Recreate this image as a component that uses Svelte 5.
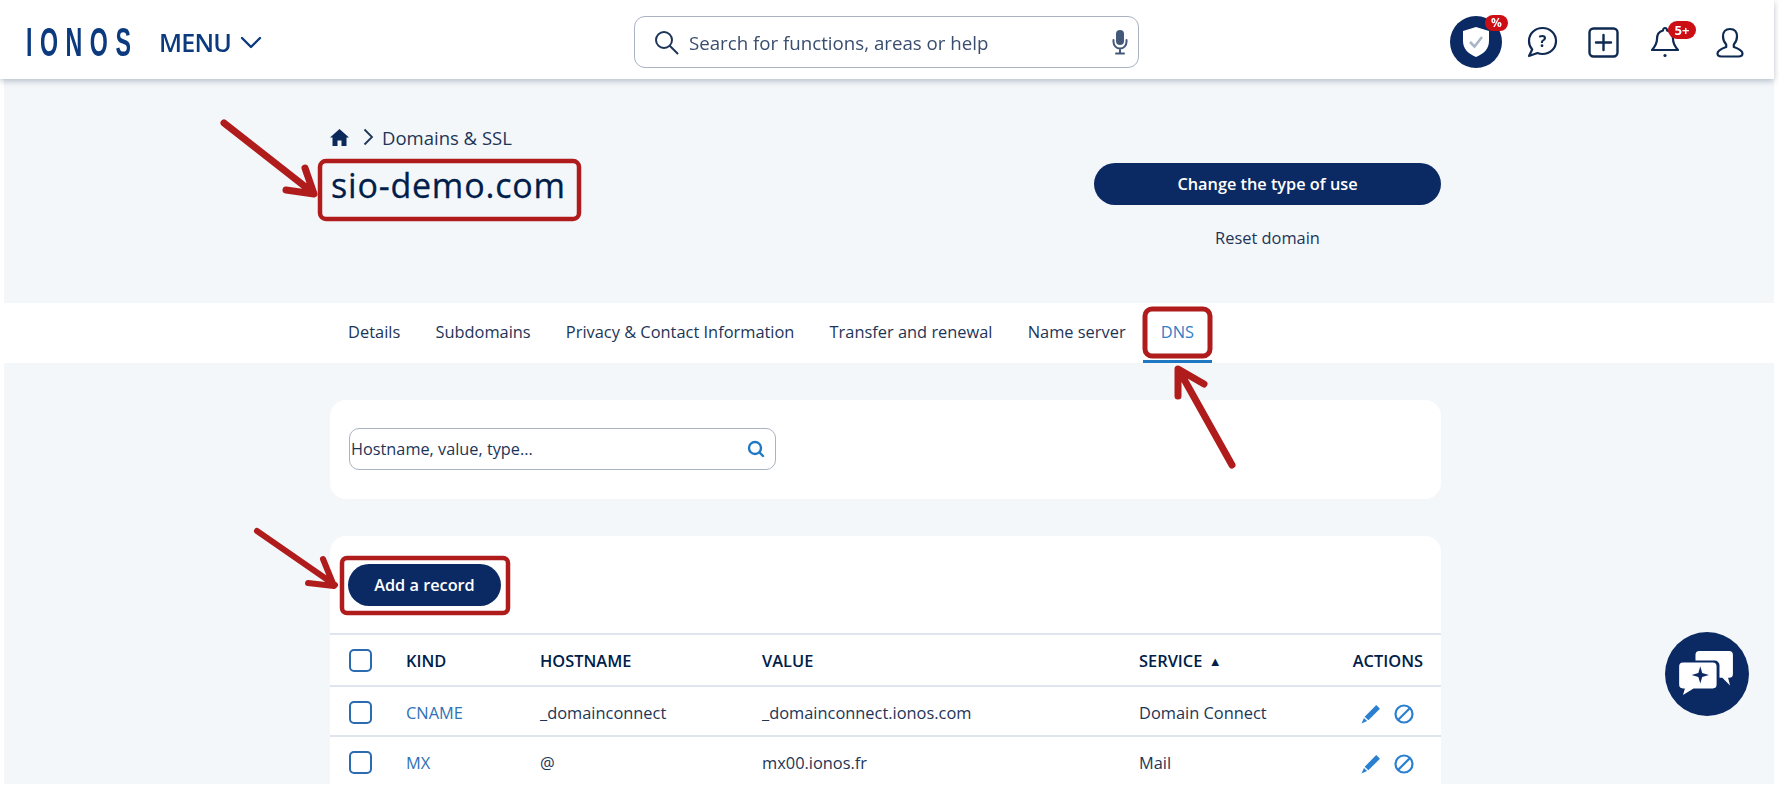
<script>
  const tabs = ['Details', 'Subdomains', 'Privacy & Contact Information', 'Transfer and renewal', 'Name server', 'DNS']
  const records = [
    { kind: 'CNAME', host: '_domainconnect', value: '_domainconnect.ionos.com', service: 'Domain Connect' },
    { kind: 'MX', host: '@', value: 'mx00.ionos.fr', service: 'Mail' }
  ]
</script>

<header class="topbar">
  <div class="brand">
    <span class="logo">IONOS</span>
    <span class="menu">MENU</span>
    <svg class="menu-chevron" width="22" height="13" viewBox="0 0 22 13" fill="none" stroke="#0b3a7e" stroke-width="2.4" stroke-linecap="round" stroke-linejoin="round"><path d="M2 2l9 9 9-9" /></svg>
  </div>
  <div class="global-search">
    <svg width="25" height="25" viewBox="0 0 25 25" fill="none" stroke="#1d3557" stroke-width="2" stroke-linecap="round"><circle cx="10" cy="10" r="8" /><path d="M16 16l7.500 7.500" /></svg>
    <span class="global-search-text">Search for functions, areas or help</span>
    <svg class="mic" width="16" height="26" viewBox="0 0 16 26" fill="none" stroke="#44597a" stroke-width="2" stroke-linecap="round"><rect x="4" y="1" width="8" height="15" rx="4" fill="#44597a" stroke="none" /><path d="M1.500 11v2a6.500 6.500 0 0 0 13 0v-2M8 20v4M4 24.500h8" /></svg>
  </div>
  <div class="tools">
    <div class="shield">
      <svg width="28" height="32" viewBox="0 0 28 32"><path d="M14 1l13 4v10c0 8-5.500 13-13 16C6.500 28 1 23 1 15V5z" fill="#fff" /><path d="M8 16l4.500 4.500L20 11" fill="none" stroke="#aab4c8" stroke-width="2.500" /></svg>
      <span class="badge badge-percent">%</span>
    </div>
    <svg class="tool help" width="32" height="32" viewBox="0 0 32 32" fill="none" stroke="#0f2a52" stroke-width="2.200" stroke-linejoin="round"><path d="M16.500 2C24 2 30 7.500 30 15s-6 13-13.500 13c-2 0-3.500-.3-5-1L3 30l3.200-6.500C4 21 3 18.200 3 15 3 7.500 9 2 16.500 2z" /><text x="16.500" y="21" text-anchor="middle" class="help-mark">?</text></svg>
    <svg class="tool plus" width="31" height="31" viewBox="0 0 31 31" fill="none" stroke="#0f2a52" stroke-width="2.400" stroke-linecap="round"><rect x="1.500" y="1.500" width="28" height="28" rx="4" /><path d="M15.500 8v15M8 15.500h15" /></svg>
    <div class="bell">
      <svg width="28" height="32" viewBox="0 0 28 32" fill="none" stroke="#0f2a52" stroke-width="2.200" stroke-linejoin="round"><path d="M14 2c1 0 2 1 2 2.500 4 1 6 4.500 6 8.500 0 5 2 7.500 5 11H1c3-3.500 5-6 5-11 0-4 2-7.500 6-8.500C12 3 13 2 14 2z" /><circle cx="14" cy="29.500" r="1.600" fill="#0f2a52" stroke="none" /></svg>
      <span class="badge badge-count">5+</span>
    </div>
    <svg class="tool user" width="28" height="31" viewBox="0 0 28 31" fill="none" stroke="#0f2a52" stroke-width="2.200" stroke-linejoin="round"><path d="M14 2c4.500 0 7 3 7 7.500 0 3-1.300 6-3.200 8v2.500c4 1.500 8.700 3 8.700 6.500 0 2-1.500 3-4 3H5.500c-2.500 0-4-1-4-3 0-3.500 4.700-5 8.700-6.500v-2.500C8.300 15.500 7 12.500 7 9.500 7 5 9.500 2 14 2z" /></svg>
  </div>
</header>

<main class="page">
  <section class="hero">
    <div class="hero-left">
      <nav class="crumbs">
        <svg width="19" height="17" viewBox="0 0 19 17"><path d="M9.500 0L19 8.500h-2.500V17h-5v-5.500h-4V17h-5V8.500H0z" fill="#0b2a5a" /></svg>
        <svg class="crumb-sep" width="11" height="18" viewBox="0 0 11 18" fill="none" stroke="#1d3557" stroke-width="1.800"><path d="M1.500 1.500L9 9l-7.500 7.500" /></svg>
        <span>Domains &amp; SSL</span>
      </nav>
      <h1>sio-demo.com</h1>
    </div>
    <div class="hero-right">
      <div class="primary-btn wide">Change the type of use</div>
      <div class="reset">Reset domain</div>
    </div>
  </section>

  <nav class="tabs">
    {#each tabs as tab (tab)}
      <span class="tab" class:active={tab === 'DNS'}>{tab}</span>
    {/each}
  </nav>

  <section class="card filter-card">
    <div class="filter">
      <span>Hostname, value, type...</span>
      <svg width="18" height="18" viewBox="0 0 18 18" fill="none" stroke="#1f78c1" stroke-width="2.400" stroke-linecap="round"><circle cx="8" cy="8" r="6" /><path d="M12.500 12.500L16 16" /></svg>
    </div>
  </section>

  <section class="card records-card">
    <div class="primary-btn add">Add a record</div>
    <table>
      <thead>
        <tr>
          <th class="col-check"><span class="check"></span></th>
          <th class="col-kind">KIND</th>
          <th class="col-host">HOSTNAME</th>
          <th class="col-value">VALUE</th>
          <th class="col-service">SERVICE <span class="sort">▲</span></th>
          <th class="col-actions">ACTIONS</th>
        </tr>
      </thead>
      <tbody>
        {#each records as rec (rec.kind)}
          <tr>
            <td><span class="check"></span></td>
            <td class="kind">{rec.kind}</td>
            <td>{rec.host}</td>
            <td>{rec.value}</td>
            <td>{rec.service}</td>
            <td class="actions">
              <svg width="20" height="20" viewBox="0 0 19 19"><path d="M14.500 1l3.500 3.500L7 15.500 3.500 12z" fill="#2a7fd0" /><path d="M2.800 13.200l3 3L0.500 18.500z" fill="#2a7fd0" /></svg>
              <svg width="20" height="20" viewBox="0 0 20 20" fill="none" stroke="#2a7fd0" stroke-width="2.200"><circle cx="10" cy="10" r="8.500" /><path d="M4 16L16 4" /></svg>
            </td>
          </tr>
        {/each}
      </tbody>
    </table>
  </section>
</main>

<div class="fab">
  <svg width="58" height="48" viewBox="0 0 60 50">
    <path d="M22 1h31a4 4 0 0 1 4 4v20a4 4 0 0 1-4 4h-1l2 8-8-8h-3V16a5 5 0 0 0-5-5H18V5a4 4 0 0 1 4-4z" fill="#fff" />
    <path d="M5 13h31a4 4 0 0 1 4 4v19a4 4 0 0 1-4 4H16L5 47l2-7H5a4 4 0 0 1-4-4V17a4 4 0 0 1 4-4z" fill="#fff" />
    <path d="M23 17l2 7 7 2-7 2-2 7-2-7-7-2 7-2z" fill="#0b2a63" />
  </svg>
</div>

<!-- red markup drawn over the screenshot -->
<svg class="markup" width="1779" height="790" viewBox="0 0 1779 790" fill="none" stroke="#b01c1c" stroke-linecap="round" stroke-linejoin="round">
  <rect x="320" y="161" width="259" height="58" rx="6" stroke-width="4.500" />
  <rect x="1145" y="309" width="65" height="47" rx="7" stroke-width="5" />
  <rect x="342" y="558" width="166" height="55" rx="5" stroke-width="4.500" />
  <path d="M224 123L312 192M305 168L314 194L286 190" stroke-width="7" />
  <path d="M1232 465L1180 372M1178 396L1178 369L1204 384" stroke-width="7" />
  <path d="M257 531L335 585M323 559L334 586L308 583" stroke-width="6" />
</svg>

<style>
  :global(body) {
    background: #fff;
    overflow: hidden;
    height: 790px;
    font-family: 'Open Sans', sans-serif;
    color: #1d3557;
  }

  .topbar {
    position: relative;
    z-index: 1;
    display: grid;
    grid-template-columns: 634px 505px 1fr;
    align-items: center;
    height: 79px;
    box-sizing: border-box;
    padding-top: 5px;
    background: #fff;
    box-shadow: 0 2px 6px rgba(60, 80, 110, 0.35);
    margin: 0 5px 0 0;
  }

  .brand {
    display: flex;
    align-items: center;
    padding-left: 26px;
  }

  .logo {
    width: 104px;
    font-family: 'Liberation Sans', sans-serif;
    font-size: 40px;
    font-weight: 700;
    line-height: 1;
    letter-spacing: 13px;
    color: #0b3a7e;
    white-space: nowrap;
    transform: scaleX(0.58);
    transform-origin: left center;
  }

  .menu {
    margin-left: 29px;
    font-size: 25px;
    font-weight: 600;
    color: #0b3a7e;
    letter-spacing: -0.8px;
  }

  .menu-chevron {
    margin-left: 9px;
  }

  .global-search {
    display: flex;
    align-items: center;
    height: 52px;
    box-sizing: border-box;
    padding: 0 10px 0 19px;
    border: 1.5px solid #a9b3c2;
    border-radius: 11px;
  }

  .global-search-text {
    flex: 1;
    margin-left: 10px;
    font-size: 18.700px;
    color: #3a4d6e;
  }

  .tools {
    display: flex;
    align-items: center;
    padding-left: 311px;
  }

  .shield {
    position: relative;
    display: flex;
    align-items: center;
    justify-content: center;
    width: 52px;
    height: 52px;
    border-radius: 50%;
    background: #0b2a63;
    flex: none;
  }

  .badge {
    position: absolute;
    display: flex;
    align-items: center;
    justify-content: center;
    background: #cc0f14;
    color: #fff;
    font-weight: 700;
    line-height: 1;
  }

  .badge-percent {
    top: -1px;
    left: 35px;
    width: 23px;
    height: 16px;
    border-radius: 8px;
    font-size: 12px;
  }

  .badge-count {
    top: -5px;
    left: 17px;
    width: 28px;
    height: 18px;
    border-radius: 9px;
    font-size: 13px;
  }

  .help {
    margin-left: 24px;
  }

  .help-mark {
    font-family: 'Open Sans', sans-serif;
    font-size: 16px;
    font-weight: 700;
    fill: #0f2a52;
    stroke: none;
  }

  .plus {
    margin-left: 30px;
  }

  .bell {
    position: relative;
    margin-left: 32px;
    height: 32px;
  }

  .user {
    margin-left: 37px;
  }

  .page {
    height: 705px;
    margin: 0 5px 0 4px;
    overflow: hidden;
    background: #f4f7fa;
  }

  .hero {
    display: flex;
    justify-content: space-between;
    width: 1111px;
    height: 224px;
    margin-left: 326px;
    box-sizing: border-box;
  }

  .hero-left {
    padding-top: 46px;
  }

  .crumbs {
    display: flex;
    align-items: center;
    height: 24px;
    font-size: 18.500px;
  }

  .crumb-sep {
    margin: 0 8px 0 14px;
  }

  h1 {
    margin: 11px 0 0 1px;
    font-size: 34px;
    font-weight: 400;
    line-height: 50px;
    letter-spacing: 0.8px;
    color: #00204a;
    -webkit-text-stroke: 0.3px #00204a;
  }

  .hero-right {
    width: 347px;
    padding-top: 84px;
    text-align: center;
  }

  .primary-btn {
    display: flex;
    align-items: center;
    justify-content: center;
    background: #0b2a63;
    color: #fff;
    font-weight: 600;
    border-radius: 22px;
    font-size: 16.300px;
  }

  .wide {
    height: 42px;
  }

  .reset {
    margin-top: 21px;
    font-size: 16.400px;
    line-height: 24px;
  }

  .tabs {
    display: flex;
    height: 60px;
    align-items: stretch;
    padding-left: 326.500px;
    background: #fff;
  }

  .tab {
    display: flex;
    align-items: center;
    padding: 0 17.600px;
    font-size: 16.400px;
    box-sizing: border-box;
    border-bottom: 3px solid transparent;
  }

  .tab.active {
    color: #2f80c8;
    border-bottom-color: #1f78c1;
  }

  .card {
    width: 1111px;
    margin-left: 326px;
    background: #fff;
    border-radius: 16px;
  }

  .filter-card {
    margin-top: 37px;
    padding: 28px 19px 28px;
    box-sizing: border-box;
    height: 99px;
  }

  .filter {
    display: flex;
    align-items: center;
    justify-content: space-between;
    width: 427px;
    height: 42px;
    box-sizing: border-box;
    padding: 0 10px 0 1px;
    border: 1.5px solid #a9b3c2;
    border-radius: 10px;
    font-size: 16.300px;
  }

  .records-card {
    margin-top: 37px;
    padding-top: 28px;
    border-radius: 16px 16px 0 0;
  }

  .add {
    width: 153px;
    height: 42px;
    margin: 0 0 27px 18px;
  }

  table {
    width: 100%;
    table-layout: fixed;
    border-collapse: collapse;
    font-size: 16.400px;
  }

  tr {
    border-top: 2px solid #dfe5ee;
  }

  th {
    height: 50px;
    padding: 0;
    text-align: left;
    font-size: 16.400px;
    font-weight: 600;
    color: #00204a;
  }

  td {
    height: 46px;
    padding: 2px 0 0;
  }

  td:first-child,
  th:first-child {
    padding-left: 19px;
  }

  .col-check {
    width: 57px;
  }

  .col-kind {
    width: 134px;
  }

  .col-host {
    width: 222px;
  }

  .col-value {
    width: 377px;
  }

  .col-actions {
    padding-right: 18px;
    text-align: right;
    width: 90px;
  }

  .sort {
    font-size: 13px;
    margin-left: 2px;
    vertical-align: 1px;
  }

  .check {
    display: block;
    width: 23px;
    height: 23px;
    box-sizing: border-box;
    border: 2px solid #2b6cb0;
    border-radius: 5px;
  }

  .kind {
    color: #2f72b5;
  }

  .actions {
    padding-right: 27px;
    text-align: right;
  }

  .actions svg {
    vertical-align: middle;
  }

  .actions svg + svg {
    margin-left: 9px;
  }

  .fab {
    position: fixed;
    left: 1665px;
    top: 632px;
    width: 84px;
    height: 84px;
    border-radius: 50%;
    background: #0b2a63;
    display: flex;
    align-items: center;
    justify-content: center;
  }

  .markup {
    position: fixed;
    left: 0;
    top: 0;
    pointer-events: none;
  }
</style>
